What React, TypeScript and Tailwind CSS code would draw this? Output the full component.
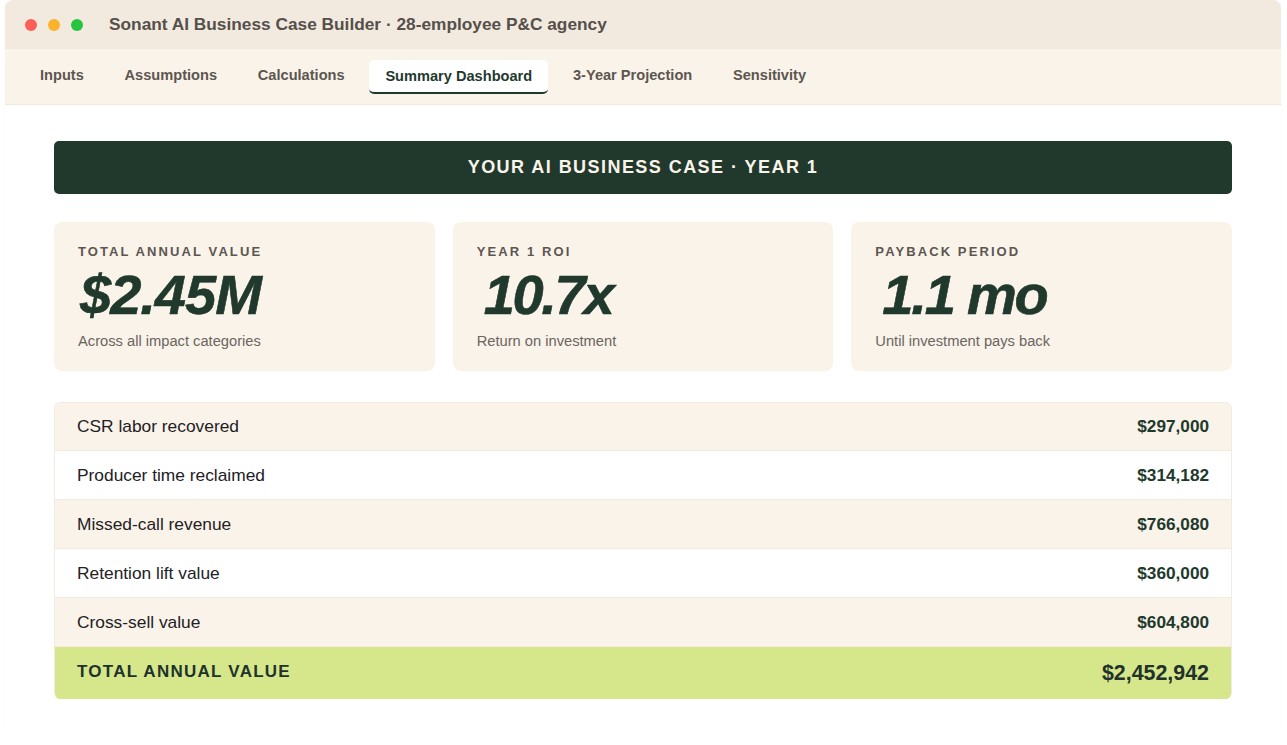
export default function App() {
  const tabs = ["Inputs", "Assumptions", "Calculations", "Summary Dashboard", "3-Year Projection", "Sensitivity"];
  const cards = [
    ["TOTAL ANNUAL VALUE", "$2.45M", "Across all impact categories", "ml-[2px] tracking-[-1px]"],
    ["YEAR 1 ROI", "10.7x", "Return on investment", "ml-[7px] tracking-[-2.3px]"],
    ["PAYBACK PERIOD", "1.1 mo", "Until investment pays back", "ml-[7px] tracking-[-2.2px]"],
  ];
  const rows = [
    ["CSR labor recovered", "$297,000"],
    ["Producer time reclaimed", "$314,182"],
    ["Missed-call revenue", "$766,080"],
    ["Retention lift value", "$360,000"],
    ["Cross-sell value", "$604,800"],
  ];
  return (
    <div className="h-[745px] w-[1287px] overflow-hidden bg-white pl-[5px] font-['Liberation_Sans',Arial,sans-serif]">
      <div className="h-[738px] w-[1276px] rounded-b-[14px] rounded-t-[8px] bg-white shadow-[0_0_3px_rgba(0,0,0,0.03)]">
        <div className="flex h-[49px] items-center rounded-t-[8px] bg-[#f2eadf] pl-[19.5px]">
          <div className="flex gap-[11px]">
            <span className="h-[12px] w-[12px] rounded-full bg-[#fd5f57]" />
            <span className="h-[12px] w-[12px] rounded-full bg-[#fbb22c]" />
            <span className="h-[12px] w-[12px] rounded-full bg-[#27c43f]" />
          </div>
          <span className="ml-[26.5px] text-[17.3px] font-bold text-[#55504b]">Sonant AI Business Case Builder · 28-employee P&amp;C agency</span>
        </div>
        <div className="flex h-[56px] items-start gap-[8.8px] border-b border-[#efe8de] bg-[#faf3ea] pl-[19px] pt-[11px]">
          {tabs.map((t, i) =>
            i === 3 ? (
              <div key={t} className="flex h-[34px] items-center rounded-[5px] border-b-2 border-[#1f3a2d] bg-white px-[16px] pt-[2px] text-[14.6px] font-bold text-[#1f3a2d]">{t}</div>
            ) : (
              <div key={t} className="flex h-[32px] items-center px-[16px] text-[14.6px] font-bold text-[#5c5650]">{t}</div>
            ),
          )}
        </div>
        <div className="px-[49px] pt-[36px]">
          <div className="flex h-[53px] items-center justify-center rounded-[5px] bg-[#20392c] text-[18px] font-bold tracking-[1.45px] text-[#faf3ea]">YOUR AI BUSINESS CASE · YEAR 1</div>
          <div className="mt-[28px] grid grid-cols-3 gap-[18px]">
            {cards.map(([a, b, c, d]) => (
              <div key={a} className="h-[149px] rounded-[8px] bg-[#faf3ea] pl-[24px] pt-[23px]">
                <div className="text-[13px] font-bold leading-[14px] tracking-[2.1px] text-[#5c5650]">{a}</div>
                <div className={`mt-[7px] text-[56px] font-bold italic leading-[58px] text-[#20392c] [-webkit-text-stroke:0.6px_#20392c] ${d}`}>{b}</div>
                <div className="mt-[7px] text-[14.7px] leading-[20px] text-[#6b6560]">{c}</div>
              </div>
            ))}
          </div>
          <div className="mt-[31px] overflow-hidden rounded-[6px] border-x border-t border-[#f3ebe1]">
            {rows.map(([a, b], i) => (
              <div key={a} className={`flex items-center justify-between border-b border-[#f3e9df] px-[22px] ${i === 0 ? "h-[48px]" : "h-[49px]"} ${i % 2 === 0 ? "bg-[#faf3ea]" : "bg-white"}`}>
                <span className="text-[17.35px] text-[#23211f]">{a}</span>
                <span className="pt-[1px] text-[17.2px] font-bold text-[#20392c]">{b}</span>
              </div>
            ))}
            <div className="flex h-[52px] items-center justify-between bg-[#d6e68a] px-[22px]">
              <span className="pb-[2px] text-[17px] font-bold tracking-[1.25px] text-[#20322b]">TOTAL ANNUAL VALUE</span>
              <span className="text-[21.4px] font-bold text-[#20322b]">$2,452,942</span>
            </div>
          </div>
        </div>
      </div>
    </div>
  );
}
